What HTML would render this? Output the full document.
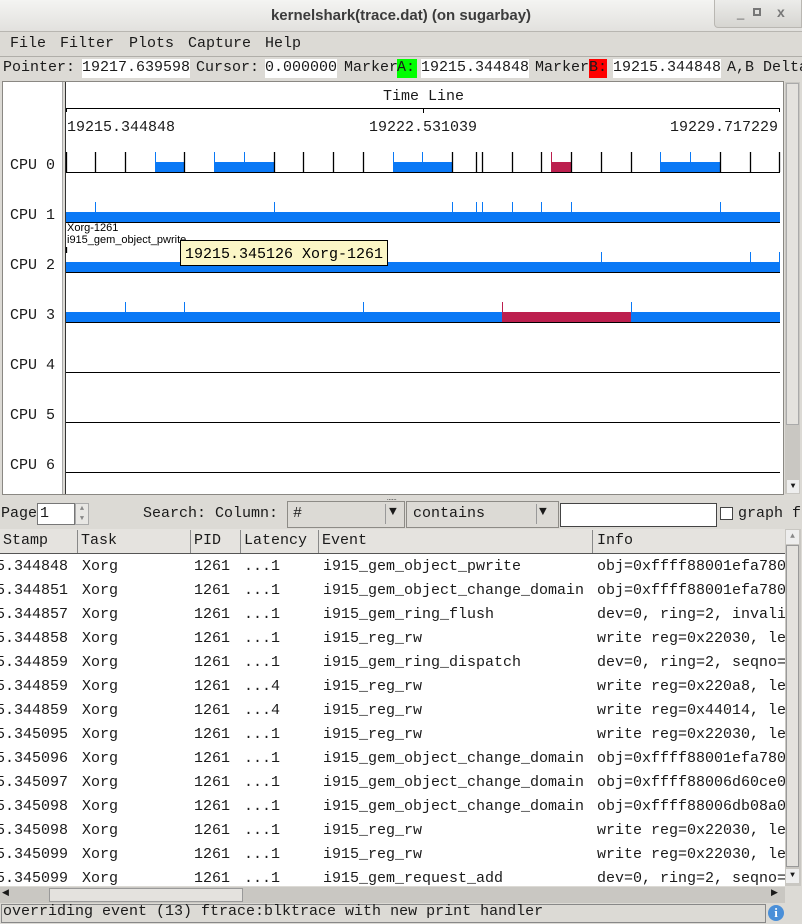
<!DOCTYPE html>
<html><head><meta charset="utf-8"><style>
*{margin:0;padding:0;box-sizing:border-box}
body{width:802px;height:924px;background:#dcdad5;position:relative;overflow:hidden;font-family:"Liberation Mono",monospace;font-size:15px;color:#1a1a1a}
.a{position:absolute;white-space:pre}
.w{background:#fff}
</style></head><body>
<!-- title bar -->
<div class="a" style="left:0;top:0;width:802px;height:32px;background:linear-gradient(#f4f4f2,#e2e1de);border-bottom:1px solid #b8b6b1"></div>
<div class="a" style="left:0;top:7px;width:802px;text-align:center;font-family:'Liberation Sans',sans-serif;font-size:15px;font-weight:bold;color:#3c3c3c">kernelshark(trace.dat) (on sugarbay)</div>
<div class="a" style="left:714px;top:0;width:88px;height:28px;background:linear-gradient(#ececea,#d6d5d1);border:1px solid #b9b7b2;border-top:none;border-radius:0 0 0 4px"></div>
<div class="a" style="left:737px;top:5px;font-family:'Liberation Sans',sans-serif;font-size:13px;color:#666">_</div>
<div class="a" style="left:753px;top:8px;width:8px;height:8px;border:2px solid #777"></div>
<div class="a" style="left:777px;top:4px;font-family:'Liberation Sans',sans-serif;font-size:14px;color:#777;font-weight:bold">x</div>
<!-- menu -->
<div class="a" style="left:0;top:33px;width:802px;height:24px;border-bottom:1px solid #b0aea9"></div>
<div class="a" style="left:10px;top:35px">File</div><div class="a" style="left:60px;top:35px">Filter</div><div class="a" style="left:129px;top:35px">Plots</div><div class="a" style="left:188px;top:35px">Capture</div><div class="a" style="left:265px;top:35px">Help</div>
<!-- info bar -->
<div class="a" style="left:3px;top:59px">Pointer:</div>
<div class="a w" style="left:82px;top:59px;width:108px;height:19px"></div><div class="a" style="left:82px;top:59px">19217.639598</div>
<div class="a" style="left:196px;top:59px">Cursor:</div>
<div class="a w" style="left:265px;top:59px;width:72px;height:19px"></div><div class="a" style="left:265px;top:59px">0.000000</div>
<div class="a" style="left:344px;top:59px">Marker</div>
<div class="a" style="left:397px;top:59px;width:20px;height:19px;background:#00ff00"></div><div class="a" style="left:397px;top:59px">A:</div>
<div class="a w" style="left:421px;top:59px;width:108px;height:19px"></div><div class="a" style="left:421px;top:59px">19215.344848</div>
<div class="a" style="left:535px;top:59px">Marker</div>
<div class="a" style="left:589px;top:59px;width:18px;height:19px;background:#ff0000"></div><div class="a" style="left:589px;top:59px">B:</div>
<div class="a w" style="left:613px;top:59px;width:108px;height:19px"></div><div class="a" style="left:613px;top:59px">19215.344848</div>
<div class="a" style="left:727px;top:59px">A,B Delta</div>
<!-- graph area -->
<div class="a" style="left:2px;top:81px;width:782px;height:414px;border:1px solid #8a8883;background:#fff"></div>
<div class="a" style="left:62px;top:82px;width:4px;height:412px;background:#dcdad5;border-left:1px solid #aaa;border-right:1px solid #333"></div>
<svg class="a" style="left:0;top:0" width="802" height="924" font-family="Liberation Mono,monospace" font-size="15">
<g fill="#1a1a1a">
<text x="10" y="169">CPU 0</text><text x="10" y="219">CPU 1</text><text x="10" y="269">CPU 2</text><text x="10" y="319">CPU 3</text><text x="10" y="369">CPU 4</text><text x="10" y="419">CPU 5</text><text x="10" y="469">CPU 6</text>
<text x="383" y="100">Time Line</text>
<text x="67" y="131">19215.344848</text><text x="369" y="131">19222.531039</text><text x="670" y="131">19229.717229</text>
</g>
<path d="M66 108.5H780M66.5 108v4M423.5 108v5M779.5 108v4" stroke="#000" fill="none"/>
<g fill="#0a79f6"><rect x="155" y="162" width="29" height="10"/><rect x="214" y="162" width="60" height="10"/><rect x="393" y="162" width="59" height="10"/><rect x="660" y="162" width="60" height="10"/>
<rect x="66" y="212" width="714" height="10"/><rect x="66" y="262" width="714" height="10"/><rect x="66" y="312" width="714" height="10"/></g>
<g fill="#bc1f4e"><rect x="551" y="162" width="20" height="10"/><rect x="502" y="312" width="129" height="10"/></g>
<path d="M66 172.5H780M66 222.5H780M66 272.5H780M66 322.5H780M66 372.5H780M66 422.5H780M66 472.5H780" stroke="#000"/>
<path d="M66.5 152v20M95.5 152v20M125.5 152v20M184.5 152v20M274.5 152v20M303.5 152v20M333.5 152v20M363.5 152v20M452.5 152v20M476.5 152v20M482.5 152v20M512.5 152v20M541.5 152v20M571.5 152v20M601.5 152v20M631.5 152v20M720.5 152v20M750.5 152v20M779.5 152v20M66.5 247v6" stroke="#000" stroke-width="1.3"/>
<path d="M155.5 152v10M214.5 152v10M244.5 152v10M393.5 152v10M422.5 152v10M660.5 152v10M690.5 152v10
M95.5 202v10M274.5 202v10M452.5 202v10M476.5 202v10M482.5 202v10M512.5 202v10M541.5 202v10M571.5 202v10M720.5 202v10
M601.5 252v10M750.5 252v10M779.5 252v10
M125.5 302v10M184.5 302v10M363.5 302v10M631.5 302v10" stroke="#0a79f6"/>
<path d="M551.5 152v10M502.5 302v10" stroke="#bc1f4e"/>
<g font-family="Liberation Sans,sans-serif" font-size="11" fill="#000"><text x="67" y="231">Xorg-1261</text><text x="67" y="243">i915_gem_object_pwrite</text></g>
<rect x="180.5" y="240.5" width="207" height="25" fill="#fbf6c6" stroke="#000"/>
<text x="185" y="258" fill="#000">19215.345126 Xorg-1261</text>
</svg>
<!-- graph scrollbar -->
<div class="a" style="left:785px;top:82px;width:15px;height:412px;background:#c9c7c2"></div>
<div class="a" style="left:786px;top:83px;width:13px;height:342px;background:#e4e2de;border:1px solid #aaa"></div>
<div class="a" style="left:787px;top:480px;width:12px;height:13px;background:#eee;font-size:8px;text-align:center;line-height:13px">▼</div>
<div class="a" style="left:387px;top:494px;font-size:8px;color:#333">……</div>
<!-- search bar -->
<div class="a" style="left:1px;top:505px">Page</div>
<div class="a w" style="left:37px;top:503px;width:38px;height:22px;border:1px solid #777"></div><div class="a" style="left:40px;top:505px">1</div>
<div class="a" style="left:75px;top:503px;width:14px;height:22px;background:#e8e7e4;border:1px solid #aaa;font-size:7px;line-height:10px;text-align:center;color:#888">▲<br>▼</div>
<div class="a" style="left:143px;top:505px">Search: Column:</div>
<div class="a" style="left:287px;top:501px;width:118px;height:27px;background:#dcdad5;border:1px solid #8d8b86"></div><div class="a" style="left:293px;top:505px">#</div>
<div class="a" style="left:385px;top:504px;width:1px;height:20px;background:#999"></div><div class="a" style="left:389px;top:504px;font-size:13px">▼</div>
<div class="a" style="left:406px;top:501px;width:153px;height:27px;background:#dcdad5;border:1px solid #8d8b86"></div><div class="a" style="left:413px;top:505px">contains</div>
<div class="a" style="left:536px;top:504px;width:1px;height:20px;background:#999"></div><div class="a" style="left:539px;top:504px;font-size:13px">▼</div>
<div class="a w" style="left:560px;top:503px;width:157px;height:24px;border:1px solid #444"></div>
<div class="a w" style="left:720px;top:507px;width:13px;height:13px;border:1px solid #444"></div>
<div class="a" style="left:738px;top:505px">graph f</div>
<!-- table -->
<div class="a w" style="left:0;top:529px;width:785px;height:357px"></div>
<div class="a" style="left:0;top:529px;width:785px;height:25px;background:#e5e3df;border-bottom:1px solid #555"></div>
<div class="a" style="left:77px;top:530px;width:1px;height:23px;background:#888"></div>
<div class="a" style="left:190px;top:530px;width:1px;height:23px;background:#888"></div>
<div class="a" style="left:240px;top:530px;width:1px;height:23px;background:#888"></div>
<div class="a" style="left:318px;top:530px;width:1px;height:23px;background:#888"></div>
<div class="a" style="left:592px;top:530px;width:1px;height:23px;background:#888"></div>
<div class="a" style="top:532px;left:3px">Stamp</div><div class="a" style="top:532px;left:81px">Task</div><div class="a" style="top:532px;left:194px">PID</div><div class="a" style="top:532px;left:244px">Latency</div><div class="a" style="top:532px;left:322px">Event</div><div class="a" style="top:532px;left:597px">Info</div>
<div class="a" style="left:0;top:557px;width:785px;height:330px;overflow:hidden;line-height:24px">
<div class="a" style="left:-4px;top:-2px">5.344848
5.344851
5.344857
5.344858
5.344859
5.344859
5.344859
5.345095
5.345096
5.345097
5.345098
5.345098
5.345099
5.345099</div>
<div class="a" style="left:82px;top:-2px">Xorg
Xorg
Xorg
Xorg
Xorg
Xorg
Xorg
Xorg
Xorg
Xorg
Xorg
Xorg
Xorg
Xorg</div>
<div class="a" style="left:194px;top:-2px">1261
1261
1261
1261
1261
1261
1261
1261
1261
1261
1261
1261
1261
1261</div>
<div class="a" style="left:244px;top:-2px">...1
...1
...1
...1
...1
...4
...4
...1
...1
...1
...1
...1
...1
...1</div>
<div class="a" style="left:323px;top:-2px">i915_gem_object_pwrite
i915_gem_object_change_domain
i915_gem_ring_flush
i915_reg_rw
i915_gem_ring_dispatch
i915_reg_rw
i915_reg_rw
i915_reg_rw
i915_gem_object_change_domain
i915_gem_object_change_domain
i915_gem_object_change_domain
i915_reg_rw
i915_reg_rw
i915_gem_request_add</div>
<div class="a" style="left:597px;top:-2px;width:188px;overflow:hidden">obj=0xffff88001efa780
obj=0xffff88001efa780
dev=0, ring=2, invali
write reg=0x22030, le
dev=0, ring=2, seqno=
write reg=0x220a8, le
write reg=0x44014, le
write reg=0x22030, le
obj=0xffff88001efa780
obj=0xffff88006d60ce0
obj=0xffff88006db08a0
write reg=0x22030, le
write reg=0x22030, le
dev=0, ring=2, seqno=</div>
</div>
<!-- table vscroll -->
<div class="a" style="left:785px;top:529px;width:16px;height:357px;background:#c9c7c2"></div>
<div class="a" style="left:786px;top:545px;width:13px;height:322px;background:#e4e2de;border:1px solid #999"></div>
<div class="a" style="left:786px;top:530px;width:13px;height:14px;background:#eee;font-size:8px;text-align:center;line-height:14px;color:#888">▲</div>
<div class="a" style="left:786px;top:869px;width:13px;height:14px;background:#eee;font-size:8px;text-align:center;line-height:14px">▼</div>
<!-- hscroll -->
<div class="a" style="left:0;top:887px;width:785px;height:16px;background:#c9c7c2"></div>
<div class="a" style="left:49px;top:888px;width:194px;height:14px;background:#e4e2de;border:1px solid #999"></div>
<div class="a" style="left:2px;top:888px;font-size:9px">◀</div>
<div class="a" style="left:771px;top:888px;font-size:9px">▶</div>
<!-- status -->
<div class="a" style="left:1px;top:904px;width:765px;height:19px;border:1px solid #888"></div>
<div class="a" style="left:3px;top:903px">overriding event (13) ftrace:blktrace with new print handler</div>
<div class="a" style="left:768px;top:905px;width:16px;height:16px;border-radius:50%;background:#4a8fd8;color:#fff;font-family:'Liberation Serif',serif;font-weight:bold;font-size:13px;text-align:center;line-height:16px">i</div>
</body></html>
